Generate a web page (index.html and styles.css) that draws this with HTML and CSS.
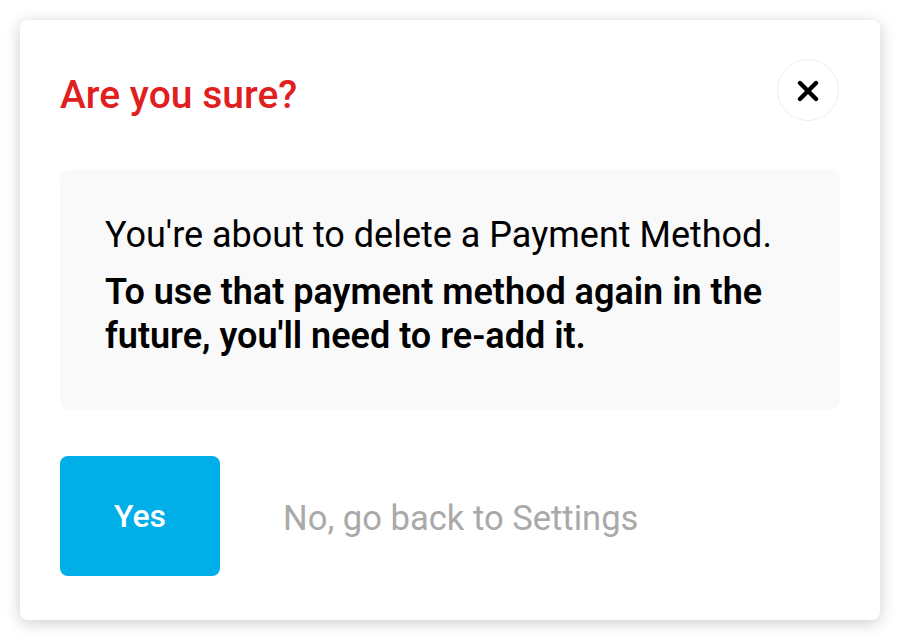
FILE: index.html
```html
<!DOCTYPE html>
<html lang="en">
<head>
<meta charset="utf-8">
<title>Are you sure?</title>
<link rel="stylesheet" href="styles.css">
</head>
<body>
<div class="dialog">
  <div class="dialog-header">
    <h1 class="dialog-title">Are you sure?</h1>
    <button class="close-btn" aria-label="Close">
      <svg width="22" height="22" viewBox="0 0 22 22" aria-hidden="true">
        <path d="M3 3 L19 19 M19 3 L3 19" stroke="#000" stroke-width="4.4" stroke-linecap="round" fill="none"/>
      </svg>
    </button>
  </div>
  <div class="message">
    <p class="message-line">You're about to delete a Payment Method.</p>
    <p class="message-strong">To use that payment method again in the future, you'll need to re-add it.</p>
  </div>
  <div class="actions">
    <button class="btn-yes">Yes</button>
    <a class="link-no" href="#">No, go back to Settings</a>
  </div>
</div>
</body>
</html>
```
FILE: styles.css
```css
html, body {
  margin: 0;
  padding: 0;
  background: #ffffff;
}
body {
  padding: 20px;
  font-family: Roboto, "Liberation Sans", Arial, sans-serif;
}
.dialog {
  width: 860px;
  box-sizing: border-box;
  background: #fff;
  border-radius: 8px;
  box-shadow: 0 3px 16px rgba(0, 0, 0, 0.2);
  padding: 38px 40px 44px 40px;
}
.dialog-header {
  display: flex;
  align-items: center;
  justify-content: space-between;
  height: 63px;
}
.dialog-title {
  margin: 0;
  padding-top: 10px;
  font-size: 39px;
  font-weight: 500;
  line-height: 40px;
  color: #e0201f;
}
.close-btn {
  width: 62px;
  height: 62px;
  border-radius: 50%;
  border: 1px solid #eeeeee;
  background: #fff;
  padding: 0;
  display: flex;
  align-items: center;
  justify-content: center;
  margin-right: 1px;
}
.close-btn svg {
  display: block;
  margin-top: 2px;
}
.message {
  margin-top: 49px;
  background: #f9f9f9;
  border-radius: 10px;
  height: 240px;
  box-sizing: border-box;
  padding: 43px 45px 0 45px;
  color: #000;
  font-size: 36px;
  line-height: 44px;
}
.message p {
  margin: 0;
}
.message-line {
  font-weight: 400;
  margin-bottom: 13px !important;
}
.message-strong {
  font-weight: 600;
}
.actions {
  margin-top: 46px;
  display: flex;
  align-items: center;
  gap: 63px;
}
.btn-yes {
  width: 160px;
  height: 120px;
  border: none;
  border-radius: 8px;
  background: #00aee8;
  color: #fff;
  font-family: Roboto, "Liberation Sans", Arial, sans-serif;
  font-size: 32px;
  font-weight: 500;
  padding: 0;
}
.link-no {
  color: #a9a9a9;
  text-decoration: none;
  font-size: 34.6px;
  font-weight: 400;
  padding-top: 3px;
}
```
